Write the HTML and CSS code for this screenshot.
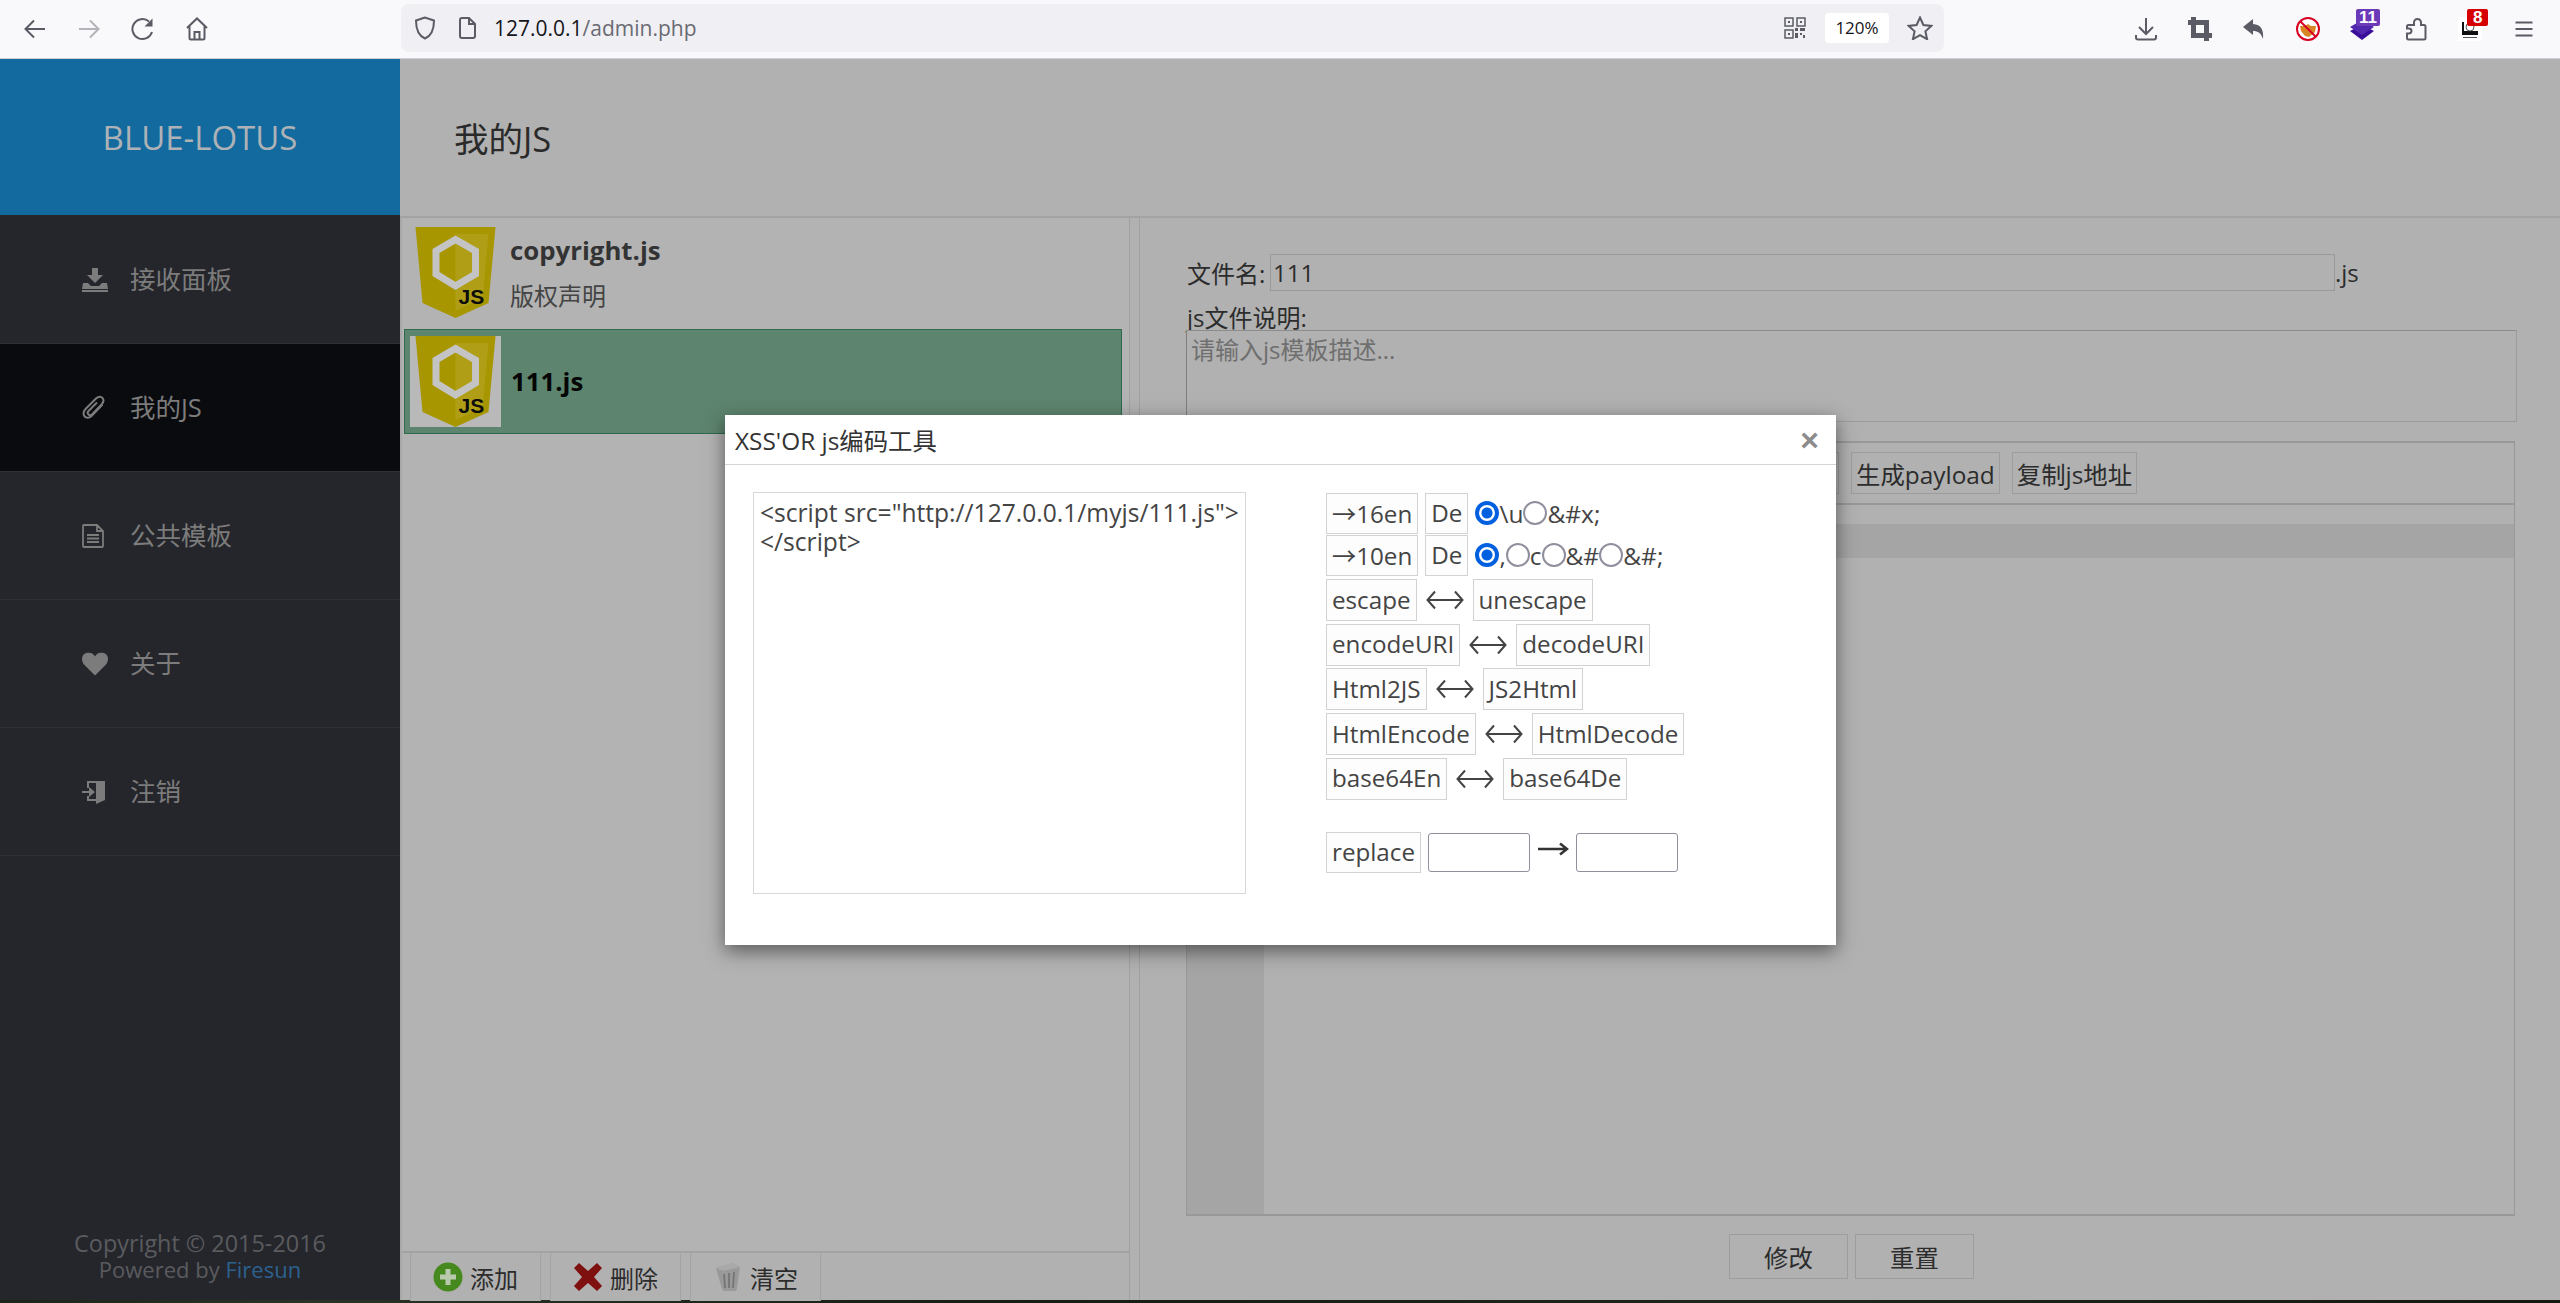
FILE: index.html
```html
<!DOCTYPE html>
<html lang="zh">
<head>
<meta charset="utf-8">
<title>BLUE-LOTUS</title>
<link rel="stylesheet" href="styles.css">
</head>
<body>
<header class="browser">
  <nav class="nav">
    <span class="tb"><svg width="24" height="24" viewBox="0 0 24 24"><path d="M22 12H2.500M11 3.500 2.500 12l8.500 8.500" class="s"/></svg></span>
    <span class="tb"><svg width="24" height="24" viewBox="0 0 24 24"><path d="M2 12h19.500M13 3.500l8.500 8.500-8.500 8.500" class="s dim"/></svg></span>
    <span class="tb"><svg width="24" height="24" viewBox="0 0 24 24"><path d="M18 4.500A10 10 0 1 0 21 15" class="s"/><path d="M21.500 1.500v8h-8z" class="f"/></svg></span>
    <span class="tb"><svg width="24" height="24" viewBox="0 0 24 24"><path d="M2 11 12 1.500 22 11M4.500 9v12a1.500 1.500 0 0 0 1.500 1.500h12a1.500 1.500 0 0 0 1.500-1.500V9M9.500 22.500V15h5v7.500" class="s"/></svg></span>
  </nav>
  <div class="urlbar">
    <svg class="shield" width="22" height="24" viewBox="0 0 22 24"><path d="M11 1.500 2 4.500c0 9 2 15 9 18 7-3 9-9 9-18z" class="s"/></svg>
    <svg class="page" width="18" height="22" viewBox="0 0 18 22"><path d="M2 3a2 2 0 0 1 2-2h7l6 6v12a2 2 0 0 1-2 2H4a2 2 0 0 1-2-2zM11 1v6h6" class="s"/></svg>
    <span class="url"><b>127.0.0.1</b>/admin.php</span>
    <svg class="qr" width="22" height="22" viewBox="0 0 22 22"><path d="M1 1h8v8H1zM13 1h8v8h-8zM1 13h8v8H1z" class="s thin"/><path d="M4 4h2v2H4zM16 4h2v2h-2zM4 16h2v2H4zM11 11h3v3h-3zM16 11h5v3h-5zM11 16h3v5h-3zM16 16h2v2h-2zM19 18h2v3h-2z" class="f"/></svg>
    <span class="zoomlevel">120%</span>
    <svg class="star" width="26" height="24" viewBox="0 0 26 24"><path d="M13 1.500l3.400 7.500 8 .9-6 5.400 1.700 7.900-7.100-4-7.100 4 1.700-7.900-6-5.400 8-.9z" class="s"/></svg>
  </div>
  <div class="tools">
    <span class="tb"><svg width="24" height="24" viewBox="0 0 24 24"><path d="M12 1v15M5 10l7 7 7-7M2 18v2.500a2 2 0 0 0 2 2h16a2 2 0 0 0 2-2V18" class="s"/></svg></span>
    <span class="tb"><svg width="24" height="24" viewBox="0 0 24 24"><path d="M5.500 0v18.500H24M18.500 24V5.500H0" class="s thick"/></svg></span>
    <span class="tb"><svg width="24" height="24" viewBox="0 0 24 24"><path d="M1 10 11 2v5c8 .5 11 6 10 15-2-6-5-8-10-8v4z" class="f"/></svg></span>
    <span class="tb"><svg width="24" height="24" viewBox="0 0 24 24"><circle cx="12" cy="12" r="11" fill="#fff"/><path d="M4 9l5 0 3-2 3 2 5 0-1 6-6 5-4-1-4-5z" fill="#d98526"/><circle cx="12" cy="12" r="11" fill="none" stroke="#d70022" stroke-width="2"/><path d="M4.500 4.500l15 15" stroke="#d70022" stroke-width="2"/></svg></span>
    <span class="tb badged"><svg class="stack" width="24" height="20" viewBox="0 0 24 20"><path d="M0 11 12 5l12 6-12 9z" fill="#3b0e9a"/><path d="M12 0 24 7 12 15 0 7z" fill="#5127ad"/></svg><span class="badge purple">11</span></span>
    <span class="tb"><svg width="21" height="23" viewBox="0 0 21 23"><path d="M8 7V4.500a3.500 3.500 0 0 1 7 0V7h3a1.500 1.500 0 0 1 1.500 1.500V20a1.500 1.500 0 0 1-1.500 1.500H2.500A1.500 1.500 0 0 1 1 20v-4.500h2a2.500 2.500 0 0 0 0-5H1V8.500A1.500 1.500 0 0 1 2.500 7z" class="s"/></svg></span>
    <span class="tb badged"><svg class="qrimg" width="24" height="24" viewBox="0 0 24 24"><rect width="24" height="24" fill="#fff"/><path d="M4 5h2v9h14v4H4z" fill="#111"/><circle cx="12" cy="10" r="4" fill="none" stroke="#555"/><path d="M5 20h14v1H5z" fill="#555"/></svg><span class="badge red">8</span></span>
    <span class="tb"><svg width="20" height="18" viewBox="0 0 20 18"><path d="M1.500 2.500h17M1.500 9h17M1.500 15.500h17" class="s"/></svg></span>
  </div>
</header>

<div class="app">
  <aside class="sidebar">
    <div class="brand">BLUE-LOTUS</div>
    <ul class="menu">
      <li class="menu-item"><svg width="26" height="24" viewBox="0 0 26 24"><path d="M10 0h6v7h5l-8 8-8-8h5zM1 15h5l3 3h8l3-3h5l1 6H0zM0 22h26v2H0z" class="mi"/></svg>接收面板</li>
      <li class="menu-item active"><svg width="24" height="26" viewBox="0 0 24 26"><path d="M20.500 9.500 9.500 21c-2.500 2.500-6 2.500-7.500-.5-1-2.500-.3-4.500 1.500-6.500L14 3.500c2-2 5-2.500 6.500-.5 1.500 2 1 4.500-1 6.500L10 19.500c-1 1-2.500 1-3.500 0s-1-2.500 0-3.500L15 7.500" fill="none" stroke="#7c7c7c" stroke-width="2"/></svg>我的JS</li>
      <li class="menu-item"><svg width="22" height="24" viewBox="0 0 22 24"><path d="M1 2a1 1 0 0 1 1-1h13l6 6v15a1 1 0 0 1-1 1H2a1 1 0 0 1-1-1zM15 1v6h6M5 11h12M5 14.500h12M5 18h12" fill="none" stroke="#7c7c7c" stroke-width="1.800"/></svg>公共模板</li>
      <li class="menu-item"><svg width="26" height="23" viewBox="0 0 26 23"><path d="M13 23 2 12C-1 8-.5 3 3 1c3-2 8-1 10 3 2-4 7-5 10-3 3.500 2 4 7 1 11z" class="mi"/></svg>关于</li>
      <li class="menu-item"><svg width="24" height="24" viewBox="0 0 24 24"><path d="M5 8V1h18v19l-9 4v-3H5v-5h2v3h7V3H7v5z" class="mi"/><path d="M0 11h7V7l6 5-6 5v-4H0z" class="mi"/></svg>注销</li>
    </ul>
    <footer class="copyright"><div class="copy-line">Copyright © 2015-2016</div><div class="power-line">Powered by <a class="author">Firesun</a></div></footer>
  </aside>

  <main class="main">
    <h1 class="page-title">我的JS</h1>
    <div class="columns">
      <section class="list-panel">
        <div class="list">
          <div class="js-item">
            <svg class="logo" width="91" height="91" viewBox="-5.500 0 91 91">
              <polygon points="0,0 80,0 73,76 40,91 7,76" fill="#a89600"/>
              <polygon points="40,7 73,7 67,71 40,84" fill="#b09f16"/>
              <polygon points="40,12.500 60,24 60,47 40,59 20.500,47 20.500,24" fill="none" stroke="#c4c4c4" stroke-width="7"/>
              <text x="43" y="77" class="logo-text">JS</text>
            </svg>
            <div class="js-meta"><div class="js-name">copyright.js</div><div class="js-desc">版权声明</div></div>
          </div>
          <div class="js-item selected">
            <svg class="logo" width="91" height="91" viewBox="-5.500 0 91 91">
              <polygon points="0,0 80,0 73,76 40,91 7,76" fill="#a89600"/>
              <polygon points="40,7 73,7 67,71 40,84" fill="#b09f16"/>
              <polygon points="40,12.500 60,24 60,47 40,59 20.500,47 20.500,24" fill="none" stroke="#c4c4c4" stroke-width="7"/>
              <text x="43" y="77" class="logo-text">JS</text>
            </svg>
            <div class="js-meta"><div class="js-name">111.js</div></div>
          </div>
        </div>
        <div class="list-actions">
          <button class="tab-btn"><svg width="30" height="30" viewBox="0 0 30 30"><circle cx="15" cy="15" r="14.500" fill="#468a1f"/><path d="M12.500 7h5v5.500H23v5h-5.500V23h-5v-5.500H7v-5h5.500z" fill="#b9c9ad"/></svg>添加</button>
          <button class="tab-btn"><svg width="30" height="30" viewBox="0 0 30 30"><path d="M1 6l5-5 9 8 9-8 5 5-8 9 8 9-5 5-9-8-9 8-5-5 8-9z" fill="#7f1010"/></svg>删除</button>
          <button class="tab-btn"><svg width="30" height="30" viewBox="0 0 30 30"><path d="M3 6l17-5 7 4-3 21a3 3 0 0 1-3 3h-9a3 3 0 0 1-3-2z" fill="#999"/><path d="M3 6l17-5 7 4-17 4z" fill="#a9a9a9"/><path d="M11 12l1 14M16 11v15M21 10l-1 16" stroke="#757575" stroke-width="1.800"/></svg>清空</button>
        </div>
      </section>

      <section class="editor-panel">
        <div class="file-row">
          <label class="file-label" for="fname">文件名:</label><input id="fname" class="file-input" value="111"><span>.js</span>
        </div>
        <label class="desc-label" for="fdesc">js文件说明:</label>
        <textarea id="fdesc" class="desc-input" placeholder="请输入js模板描述..."></textarea>
        <div class="editor">
          <div class="editor-bar">
            <button class="btn btn-hidden">js编码工具</button>
            <button class="btn">生成payload</button>
            <button class="btn">复制js地址</button>
          </div>
          <div class="editor-body">
            <div class="gutter"></div>
            <div class="code"><div class="active-line"></div></div>
          </div>
        </div>
        <div class="form-actions">
          <button class="btn btn-wide">修改</button>
          <button class="btn btn-wide">重置</button>
        </div>
      </section>
    </div>
  </main>

  <div class="modal">
    <div class="modal-head"><span>XSS'OR js编码工具</span><span class="close">×</span></div>
    <div class="modal-body">
      <textarea class="source" readonly>&lt;script src="http://127.0.0.1/myjs/111.js"&gt;&lt;/script&gt;</textarea>
      <div class="coder">
        <div class="row r1"><button class="cbtn"><i class="arr">→</i>16en</button><button class="cbtn">De</button><input class="radio" type="radio" name="a" checked>\u<input class="radio" type="radio" name="a">&amp;#x;</div>
        <div class="row r1"><button class="cbtn"><i class="arr">→</i>10en</button><button class="cbtn">De</button><input class="radio" type="radio" name="b" checked>,<input class="radio" type="radio" name="b">c<input class="radio" type="radio" name="b">&amp;#<input class="radio" type="radio" name="b">&amp;#;</div>
        <div class="row pair"><button class="cbtn">escape</button><svg class="lr" width="38" height="20" viewBox="0 0 38 20"><path d="M9 1.500 1.500 10 9 18.500M1.500 10h35M29 1.500l7.500 8.500-7.500 8.500" fill="none" stroke="#444" stroke-width="2"/></svg><button class="cbtn">unescape</button></div>
        <div class="row pair"><button class="cbtn">encodeURI</button><svg class="lr" width="38" height="20" viewBox="0 0 38 20"><path d="M9 1.500 1.500 10 9 18.500M1.500 10h35M29 1.500l7.500 8.500-7.500 8.500" fill="none" stroke="#444" stroke-width="2"/></svg><button class="cbtn">decodeURI</button></div>
        <div class="row pair"><button class="cbtn">Html2JS</button><svg class="lr" width="38" height="20" viewBox="0 0 38 20"><path d="M9 1.500 1.500 10 9 18.500M1.500 10h35M29 1.500l7.500 8.500-7.500 8.500" fill="none" stroke="#444" stroke-width="2"/></svg><button class="cbtn">JS2Html</button></div>
        <div class="row pair"><button class="cbtn">HtmlEncode</button><svg class="lr" width="38" height="20" viewBox="0 0 38 20"><path d="M9 1.500 1.500 10 9 18.500M1.500 10h35M29 1.500l7.500 8.500-7.500 8.500" fill="none" stroke="#444" stroke-width="2"/></svg><button class="cbtn">HtmlDecode</button></div>
        <div class="row pair"><button class="cbtn">base64En</button><svg class="lr" width="38" height="20" viewBox="0 0 38 20"><path d="M9 1.500 1.500 10 9 18.500M1.500 10h35M29 1.500l7.500 8.500-7.500 8.500" fill="none" stroke="#444" stroke-width="2"/></svg><button class="cbtn">base64De</button></div>
        <div class="row replace"><button class="cbtn">replace</button><input class="rep-input"><svg class="ra" width="32" height="14" viewBox="0 0 32 14"><path d="M1 7h29M23 1.500 30 7l-7 5.500" fill="none" stroke="#333" stroke-width="2.500"/></svg><input class="rep-input"></div>
      </div>
    </div>
  </div>
</div>
<div class="wallpaper"></div>
</body>
</html>
```

FILE: styles.css
```css
* { box-sizing: border-box; }
html, body { margin: 0; height: 100%; }
body {
  width: 2560px; height: 1303px; overflow: hidden;
  display: flex; flex-direction: column;
  font-family: "Open Sans", "Noto Sans CJK SC", sans-serif;
  font-size: 24px; color: #2c2c2c; background: #b1b1b1;
}
.logo-text { font: bold 21px "Liberation Sans", sans-serif; fill: #0c0c0c; }

/* browser chrome */
.browser { height: 59px; flex: none; display: flex; align-items: flex-start; background: #f9f9fb; border-bottom: 1px solid #cfcfd3; }
.nav { display: flex; margin-left: 8px; height: 58px; align-items: center; }
.tb { position: relative; width: 54px; height: 58px; display: flex; align-items: center; justify-content: center; }
.s { fill: none; stroke: #5b5b66; stroke-width: 2; }
.s.dim { stroke: #b3b3b9; }
.s.thin { stroke-width: 1.500; }
.s.thick { stroke-width: 5; }
.f { fill: #5b5b66; }
.urlbar { margin: 4px 0 0 177px; width: 1543px; height: 48px; display: flex; align-items: center; background: #f0f0f4; border-radius: 8px; color: #6a6a72; font-size: 21px; }
.shield { margin-left: 13px; }
.page { margin-left: 22px; }
.url { margin-left: 18px; }
.url b { font-weight: 400; color: #15141a; }
.qr { margin-left: auto; }
.zoomlevel { margin-left: 19px; width: 64px; height: 30px; line-height: 30px; text-align: center; font-size: 17px; color: #15141a; background: #fff; border-radius: 4px; }
.star { margin: 0 11px 0 18px; }
.tools { margin-left: auto; margin-right: 9px; display: flex; height: 58px; }
.badge { position: absolute; top: 9px; height: 17px; padding: 0 4px; border-radius: 2px; font: bold 17px/17px "Liberation Sans", sans-serif; color: #fff; }
.badge.purple { background: #6a3ab8; left: 21px; padding: 0 3px; }
.badge.red { background: #d70000; left: 24px; padding: 0 6px; }
.stack { margin-top: 2px; }
.qrimg { margin-top: -1px; }

/* app */
.app { position: relative; flex: 1; display: flex; min-height: 0; }
.sidebar { width: 400px; flex: none; display: flex; flex-direction: column; background: #25262b; color: #7c7c7c; }
.brand { height: 156px; display: flex; align-items: center; justify-content: center; background: #126a9f; color: #aeb2b6; font-size: 33px; font-weight: 400; }
.menu { list-style: none; margin: 0; padding: 1px 0 0; }
.menu-item { position: relative; height: 128px; display: flex; align-items: center; padding: 0 0 5px 130px; border-bottom: 1px solid #2f3035; font-size: 25.500px; }
.menu-item svg { position: absolute; left: 82px; top: 50%; transform: translateY(-50%); }
.menu-item.active { background: #0a0b0e; }
.mi { fill: #7c7c7c; }
.copyright { margin-top: auto; padding-bottom: 18px; text-align: center; line-height: 26px; color: #5a5b5f; }
.copy-line { font-size: 23.400px; }
.power-line { font-size: 22px; }
.author { color: #2c618f; }

.main { flex: 1; display: flex; flex-direction: column; min-width: 0; }
.page-title { margin: 0; height: 159px; flex: none; padding: 0 0 2px 54px; display: flex; align-items: center; font-size: 34.500px; font-weight: 400; border-bottom: 2px solid #a3a3a3; color: #2a2a2a; }
.columns { flex: 1; display: flex; min-height: 0; }

.list-panel { width: 730px; flex: none; display: flex; flex-direction: column; border-left: 2px solid #a8a8a8; border-right: 1px solid #a0a0a0; background: #b3b3b3; }
.list { flex: 1; padding: 0 7px 0 2px; display: flex; flex-direction: column; gap: 2px; }
.js-item { display: flex; align-items: center; padding: 9px 6px; }
.js-item.selected { padding: 6px 5px; border: 1px solid #2e6a4c; background: #5d846e; }
.selected .logo { background: #b9b9b9; }
.selected .js-meta { margin-top: -2px; margin-left: 10px; }
.logo { flex: none; display: block; }
.js-meta { margin-left: 9px; }
.js-name { font-size: 25.800px; font-weight: 700; line-height: 34px; color: #333; }
.selected .js-name { color: #050505; }
.js-desc { margin-top: 12px; font-size: 24px; line-height: 34px; color: #444; }
.list-actions { height: 49px; flex: none; display: flex; gap: 9px; padding-left: 8px; background: #b1b1b1; border-top: 2px solid #a3a3a3; }
.tab-btn { width: 131px; height: 48px; padding: 0 0 0 22px; display: flex; align-items: center; gap: 7px; background: #b1b1b1; border: 1px solid #a3a3a3; border-width: 0 1px; font: inherit; color: #2c2c2c; }

.editor-panel { flex: 1; min-width: 0; margin-left: 9px; border-left: 1px solid #a0a0a0; padding: 36px 0 0 47px; display: flex; flex-direction: column; align-items: flex-start; }
.file-row { display: flex; align-items: center; height: 37px; }
.file-label { width: 83px; }
.file-input { width: 1065px; height: 37px; padding: 0 2px; border: 1px solid #999; background: #b1b1b1; font: inherit; color: #2c2c2c; }
.desc-label { margin-top: 13px; height: 26px; line-height: 28px; }
.desc-input { display: block; margin-left: -1px; width: 1331px; height: 92px; padding: 4px 4px 0; resize: none; border: 1px solid #9c9c9c; border-left-color: #7f7f7f; border-top-color: #8c8c8c; background: #b1b1b1; font: inherit; line-height: 30px; }
.desc-input::placeholder { color: #6f6f6f; opacity: 1; }
.editor { margin: 19px 0 0 -1px; width: 1329px; height: 775px; display: flex; flex-direction: column; border: 1px solid #989898; border-top-width: 2px; border-bottom-width: 2px; }
.editor-bar { height: 62px; flex: none; display: flex; gap: 12px; align-items: center; padding-left: 512px; border-bottom: 2px solid #989898; }
.btn { height: 42px; padding: 0 4px; background: #b1b1b1; border: 1px solid #9d9d9d; font: inherit; font-size: 24.400px; color: #2c2c2c; }
.btn-hidden { width: 140px; }
.editor-body { flex: 1; display: flex; min-height: 0; position: relative; }
.gutter { width: 77px; background: #a5a5a5; }
.code { flex: 1; padding-top: 19px; }
.active-line { height: 34px; background: #a5a5a5; }
.form-actions { margin-top: 18px; width: 1329px; display: flex; justify-content: center; gap: 7px; }
.btn-wide { width: 119px; height: 45px; }

/* modal */
.modal { position: absolute; left: 725px; top: 356px; width: 1111px; height: 530px; background: #fff; box-shadow: 0 6px 18px rgba(0,0,0,.5); color: #444; font-size: 24.500px; }
.modal-head { height: 50px; padding: 0 17px 0 10px; display: flex; align-items: center; justify-content: space-between; border-bottom: 1px solid #d4d4d4; color: #333; font-size: 24.400px; }
.close { font: bold 32px/1 "Liberation Sans", sans-serif; color: #8c8c8c; }
.modal-body { display: flex; padding: 27px 0 0 28px; }
.source { width: 493px; height: 402px; padding: 5px 6px; resize: none; border: 1px solid #d8d8d8; font: inherit; font-size: 24.600px; line-height: 29px; color: #444; outline: none; }
.coder { margin-left: 80px; display: flex; flex-direction: column; align-items: flex-start; }
.row { display: flex; align-items: center; }
.r1 { height: 42px; }
.r1 .cbtn { height: 41px; margin-right: 7px; }
.pair { margin-top: 2.700px; height: 42px; }
.r1 + .pair { margin-top: 3px; }
.lr { margin: 0 9px; flex: none; }
.pair .cbtn { height: 42px; }
.cbtn { padding: 0 5px 2px; background: #fdfdfd; border: 1px solid #d2d2d2; font: inherit; font-size: 24.200px; color: #444; white-space: nowrap; }
.arr { font-style: normal; font-family: "Noto Sans CJK SC", sans-serif; }
.radio { appearance: none; -webkit-appearance: none; flex: none; margin: 0; width: 24px; height: 24px; border-radius: 50%; border: 2.500px solid #8f8f9d; background: #fff; }
.radio:checked { border: 4px solid #0060df; background: radial-gradient(circle, #0060df 0 5px, #fff 6px); }
.replace { margin-top: 32px; height: 41px; }
.replace .cbtn { height: 41px; }
.rep-input { width: 102px; height: 39px; margin-left: 7px; border: 1px solid #8f8f9d; border-radius: 3px; background: #fff; }
.ra { margin-left: 7px; flex: none; position: relative; top: -3px; }

.wallpaper { height: 3px; flex: none; background: linear-gradient(90deg, #1d2419, #2a3326 12%, #171c14 40%, #20261b 70%, #15180f); }
```
